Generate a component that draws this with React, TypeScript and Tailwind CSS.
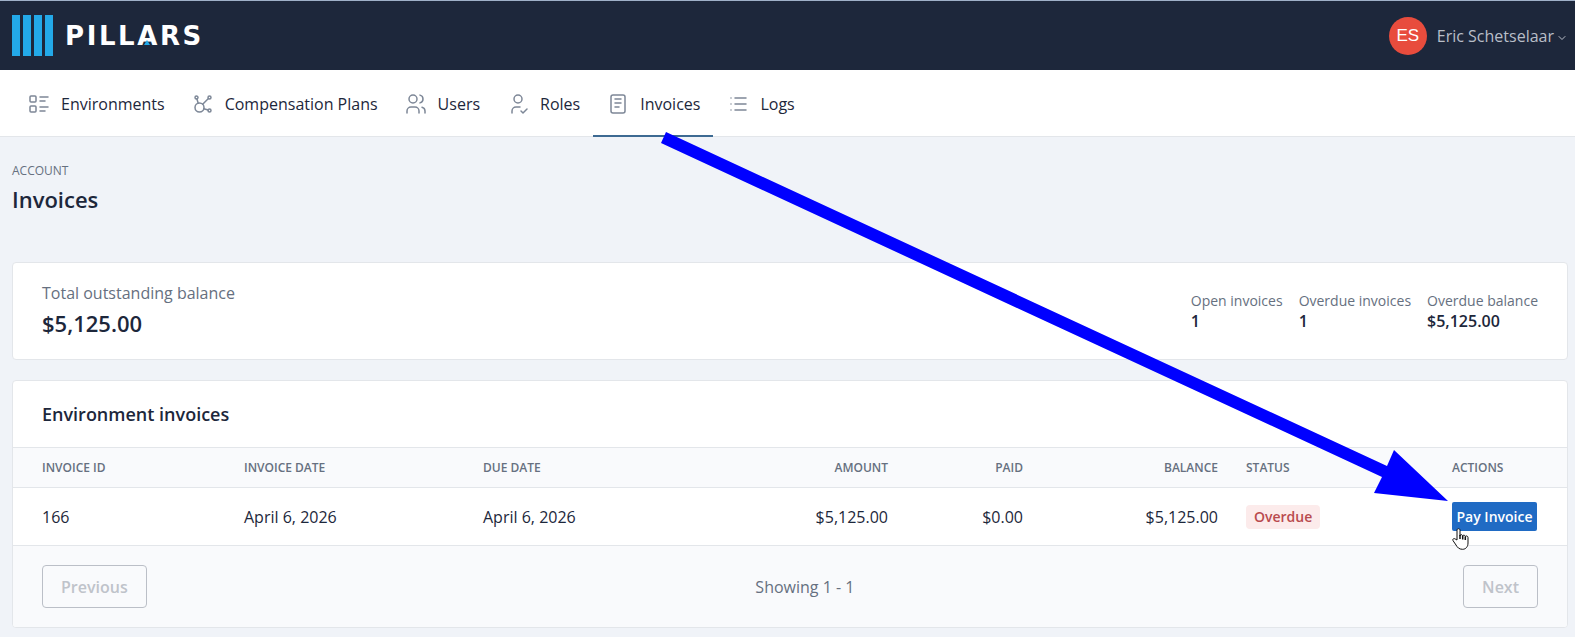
import { TbAffiliate, TbChevronDown, TbList, TbListDetails, TbNotes, TbUserCheck, TbUsers } from "react-icons/tb";
import clsx from "clsx";

const navItems = [
  { label: "Environments", icon: TbListDetails },
  { label: "Compensation Plans", icon: TbAffiliate },
  { label: "Users", icon: TbUsers },
  { label: "Roles", icon: TbUserCheck },
  { label: "Invoices", icon: TbNotes, active: true },
  { label: "Logs", icon: TbList },
];

const summary = [
  { label: "Open invoices", value: "1" },
  { label: "Overdue invoices", value: "1" },
  { label: "Overdue balance", value: "$5,125.00" },
];

const columns = [
  { label: "Invoice ID", className: "w-[217px] pl-[29px] text-left" },
  { label: "Invoice date", className: "w-[239px] text-left" },
  { label: "Due date", className: "w-[238px] text-left" },
  { label: "Amount", className: "w-[195px] text-right" },
  { label: "Paid", className: "w-[135px] text-right" },
  { label: "Balance", className: "w-[195px] text-right" },
  { label: "Status", className: "w-[206px] text-left" },
  { label: "Actions", className: "w-[129px] text-left" },
];

const invoices = [
  { id: "166", date: "April 6, 2026", due: "April 6, 2026", amount: "$5,125.00", paid: "$0.00", balance: "$5,125.00", status: "Overdue" },
];

function Logo() {
  return (
    <a href="#" aria-label="Pillars" className="flex items-center gap-3">
      <svg width="41" height="42" viewBox="0 0 41 42" fill="#23a9e8" aria-hidden="true">
        <rect x="0" width="8" height="41" />
        <rect x="11" width="8" height="41" />
        <rect x="22" width="8" height="41" />
        <rect x="33" width="8" height="41" />
      </svg>
      <span className="font-['DejaVu_Sans'] text-[26px] leading-[42px] font-bold tracking-widest text-white">
        PILL
        <span className="relative">
          A
          <svg className="absolute bottom-[6px] left-[7px]" width="6" height="5" viewBox="0 0 6 5" aria-hidden="true">
            <path d="M3 0L6 5H0Z" fill="#23a9e8" />
          </svg>
        </span>
        RS
      </span>
    </a>
  );
}

function HandCursor() {
  return (
    <svg className="absolute top-[26px] left-0" width="17" height="22" viewBox="0 0 17 22" aria-hidden="true">
      <path
        d="M5 12V2.2C5 .2 8 .2 8 2.2V8C8 6.2 10.7 6.2 10.7 8.2C10.7 6.8 13.3 6.8 13.3 8.8C13.3 7.4 16 7.6 16 9.6V15C16 18.5 14 21.3 10.5 21.3C7 21.3 5.5 19.5 4 17L1 12.6C.2 11 2 10 3.2 11Z"
        fill="#fff"
        stroke="#111"
        strokeWidth="1"
      />
      <path d="M8 7v4M10.7 8v3.5M13.3 9v3" stroke="#111" strokeWidth="1.5" />
    </svg>
  );
}

export default function App() {
  return (
    <div className="relative min-h-screen overflow-x-hidden bg-[#f0f3f8] pb-2 font-['Open_Sans',sans-serif] text-[16px] leading-6 text-[#1d273b]">
      <header className="flex h-[70px] items-center justify-between border-t border-[#9fb0c8] bg-[#1d273b] pr-[7px] pl-3">
        <Logo />
        <button className="flex items-center text-[#b9bec8]">
          <span className="mr-[10px] flex size-[38px] items-center justify-center rounded-full bg-[#e84c3d] font-['Liberation_Sans'] text-[17px] text-white">
            ES
          </span>
          Eric Schetselaar
          <TbChevronDown className="mt-1 ml-0.5 size-[12px]" />
        </button>
      </header>

      <nav className="flex h-[67px] border-b border-[#e3e6ea] bg-white pl-[14px]">
        {navItems.map(({ label, icon: Icon, active }) => (
          <a
            key={label}
            href="#"
            className={clsx("-mb-px flex items-center gap-[10px] border-b-2 px-[13px] pt-0.5", active ? "border-[#3d6a92]" : "border-transparent")}
          >
            <Icon className="size-6 text-[#7d8797]" strokeWidth={1.5} />
            {label}
          </a>
        ))}
      </nav>

      <main className="pr-[7px] pl-3">
        <div className="pt-6">
          <p className="text-[12px] leading-5 text-[#667080] uppercase">Account</p>
          <h1 className="text-[22px] leading-9 font-semibold">Invoices</h1>
        </div>

        <section className="mt-[45px] flex items-center justify-between rounded border border-[#e3e6ea] bg-white px-[29px] py-[18px]">
          <div>
            <p className="leading-6 text-[#667080]">Total outstanding balance</p>
            <p className="text-[22px] leading-9 font-semibold">$5,125.00</p>
          </div>
          <dl className="flex gap-4">
            {summary.map((item) => (
              <div key={item.label}>
                <dt className="text-[14px] leading-5 text-[#667080]">{item.label}</dt>
                <dd className="text-[16px] leading-5 font-semibold">{item.value}</dd>
              </div>
            ))}
          </dl>
        </section>

        <section className="mt-5 overflow-hidden rounded border border-[#e3e6ea] bg-white">
          <h2 className="px-[29px] py-[21px] text-[18px] leading-6 font-semibold">Environment invoices</h2>
          <table className="w-full table-fixed">
            <thead>
              <tr className="h-10 border-y border-[#e3e6ea] bg-[#f9fafc] text-[12px] text-[#667080] uppercase">
                {columns.map((col) => (
                  <th key={col.label} className={clsx("px-[14px] font-semibold", col.className)}>{col.label}</th>
                ))}
              </tr>
            </thead>
            <tbody>
              {invoices.map((inv) => (
                <tr key={inv.id} className="h-[58px] border-b border-[#e3e6ea]">
                  <td className="pl-[29px]">{inv.id}</td>
                  <td className="px-[14px]">{inv.date}</td>
                  <td className="px-[14px]">{inv.due}</td>
                  <td className="px-[14px] text-right">{inv.amount}</td>
                  <td className="px-[14px] text-right">{inv.paid}</td>
                  <td className="px-[14px] text-right">{inv.balance}</td>
                  <td className="px-[14px]">
                    <span className="inline-block rounded bg-[#fcebeb] px-2 text-[14px] font-semibold text-[#b94a4e]">{inv.status}</span>
                  </td>
                  <td className="pl-[14px]">
                    <div className="relative w-fit">
                      <button className="block h-[29px] w-[85px] rounded-xs bg-[#206bc4] text-[14px] font-semibold whitespace-nowrap text-white">
                        Pay Invoice
                      </button>
                      <HandCursor />
                    </div>
                  </td>
                </tr>
              ))}
            </tbody>
          </table>
          <div className="flex items-center justify-between bg-[#f9fafc] px-[29px] py-[19px] text-[#667080]">
            <button disabled className="h-[43px] rounded border border-[#bbbfc7] px-[18px] font-semibold text-[#bfc3ca]">Previous</button>
            <span>Showing 1 - 1</span>
            <button disabled className="h-[43px] rounded border border-[#bbbfc7] px-[18px] font-semibold text-[#bfc3ca]">Next</button>
          </div>
        </section>
      </main>

      {/* callout from the Invoices tab to the pay button */}
      <svg className="pointer-events-none absolute top-[132px] left-[661px]" width="788" height="371" viewBox="0 0 788 371" aria-hidden="true">
        <path d="M5 0L726 334L733 318L787 369L713 361L721 345L0 11Z" fill="#00f" />
      </svg>
    </div>
  );
}
